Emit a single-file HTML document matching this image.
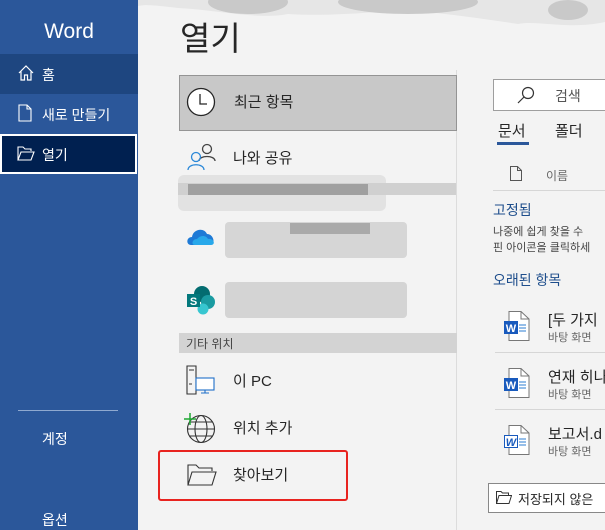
<!DOCTYPE html>
<html><head><meta charset="utf-8"><style>
*{margin:0;padding:0;box-sizing:border-box}
body{width:605px;height:530px;overflow:hidden;background:#f3f3f3;font-family:"Liberation Sans","Noto Sans CJK KR",sans-serif;position:relative;color:#262626}
.abs{position:absolute}
#side{left:0;top:0;width:138px;height:530px;background:#2b579a;color:#fff}
.t{font-size:14px;white-space:nowrap}
</style></head><body>
<div id="side" class="abs">
 <div class="abs" style="left:0;top:20px;width:138px;text-align:center;font-size:21px">Word</div>
 <div class="abs" style="left:0;top:54px;width:138px;height:40px;background:#1e4680"></div>
 <svg class="abs" style="left:17px;top:64px" width="18" height="18" viewBox="0 0 18 18" fill="none" stroke="#fff" stroke-width="1.2"><path d="M2 9 L9 2 L16 9 M4 7.5 V16 H7.5 V11 H10.5 V16 H14 V7.5"/></svg>
 <div class="abs t" style="left:42px;top:65px">홈</div>
 <svg class="abs" style="left:18px;top:104px" width="14" height="18" viewBox="0 0 14 18" fill="none" stroke="#fff" stroke-width="1.1"><path d="M1 1 H9 L13 5 V17 H1 Z M9 1 V5 H13"/></svg>
 <div class="abs t" style="left:42px;top:105px">새로 만들기</div>
 <div class="abs" style="left:0;top:134px;width:137px;height:40px;background:#002050;border:2px solid #fff"></div>
 <svg class="abs" style="left:17px;top:146px" width="18" height="15" viewBox="0 0 18 15" fill="none" stroke="#fff" stroke-width="1.1"><path d="M1 14 V1 H6 L8 3 H14 V5 M1 14 L4 6 H17 L14 14 Z"/></svg>
 <div class="abs t" style="left:42px;top:145px">열기</div>
 <div class="abs" style="left:18px;top:410px;width:100px;height:1px;background:#8fa9d0"></div>
 <div class="abs t" style="left:42px;top:429px">계정</div>
 <div class="abs t" style="left:42px;top:510px">옵션</div>
</div>
<!-- top decorative -->
<svg class="abs" style="left:138px;top:0" width="467" height="45" viewBox="0 0 467 45">
 <path d="M0 0 H467 V22 C430 30 400 20 380 24 C340 18 300 12 260 10 C220 14 180 16 150 14 C120 20 80 10 40 8 C20 6 10 4 0 6Z" fill="#e6e6e6"/>
 <ellipse cx="110" cy="2" rx="40" ry="12" fill="#c9c9c9"/>
 <ellipse cx="270" cy="2" rx="70" ry="12" fill="#c9c9c9"/>
 <ellipse cx="430" cy="10" rx="20" ry="10" fill="#c9c9c9"/>
</svg>
<div class="abs" style="left:180px;top:12px;font-size:33px;color:#262626">열기</div>
<!-- left column -->
<div class="abs" style="left:456px;top:70px;width:1px;height:460px;background:#dcdcdc"></div>
<div class="abs" style="left:179px;top:75px;width:278px;height:56px;background:#c8c8c8;border:1px solid #949494"></div>
<svg class="abs" style="left:186px;top:87px" width="30" height="30" viewBox="0 0 30 30"><circle cx="15" cy="15" r="13.5" fill="#fff" stroke="#262626" stroke-width="1.3"/><path d="M14 7 V17 H21" fill="none" stroke="#262626" stroke-width="1.3"/></svg>
<div class="abs" style="left:234px;top:91px;font-size:15px">최근 항목</div>
<svg class="abs" style="left:186px;top:142px" width="32" height="32" viewBox="0 0 32 32" fill="none" stroke-width="1.3"><circle cx="21" cy="7" r="4.5" stroke="#444"/><path d="M13 19 C13 13 29 13 29 19" stroke="#444"/><circle cx="10" cy="15" r="4.5" stroke="#2b88d8"/><path d="M2 28 C2 21 18 21 18 28" stroke="#2b88d8"/></svg>
<div class="abs" style="left:233px;top:147px;font-size:15px">나와 공유</div>
<div class="abs" style="left:178px;top:175px;width:208px;height:36px;background:#e2e2e2;border-radius:6px"></div>
<div class="abs" style="left:178px;top:183px;width:278px;height:12px;background:#d0d0d0"></div>
<div class="abs" style="left:188px;top:184px;width:180px;height:11px;background:#a0a0a0"></div>
<svg class="abs" style="left:186px;top:225px" width="30" height="22" viewBox="0 0 30 22"><path d="M5 20 C0 20 0 12 6 12 C7 4 18 2 21 9 C28 9 30 20 24 20Z" fill="#1e7ad6"/><path d="M9 20 C5 20 6 14 11 14 C14 10 20 10 22 14 C28 13 30 20 25 20Z" fill="#28a8ea"/></svg>
<div class="abs" style="left:225px;top:222px;width:182px;height:36px;background:#d6d6d6;border-radius:4px"></div>
<div class="abs" style="left:290px;top:223px;width:80px;height:11px;background:#aaa"></div>
<svg class="abs" style="left:186px;top:285px" width="30" height="30" viewBox="0 0 30 30"><circle cx="16" cy="9" r="8" fill="#036c70"/><circle cx="22" cy="17" r="7" fill="#1a9ba1"/><circle cx="17" cy="24" r="5.5" fill="#37c6d0"/><rect x="1" y="9" width="13" height="13" fill="#03787c"/><text x="7.5" y="20" font-size="11" fill="#fff" text-anchor="middle" font-weight="bold" font-family="Liberation Sans">S</text></svg>
<div class="abs" style="left:225px;top:282px;width:182px;height:36px;background:#d4d4d4;border-radius:4px"></div>
<div class="abs" style="left:179px;top:333px;width:278px;height:20px;background:#d3d3d3"></div>
<div class="abs" style="left:186px;top:335px;font-size:12px;color:#444">기타 위치</div>
<svg class="abs" style="left:186px;top:365px" width="30" height="30" viewBox="0 0 30 30" fill="none" stroke-width="1.1"><path d="M1 1 H10 V29 H1 Z M3 5 H8 M3 19 H6" stroke="#333"/><rect x="10" y="13" width="18" height="12" fill="#fff" stroke="#1e6fc8"/><path d="M19 25 V28 M15 28 H23" stroke="#1e6fc8"/></svg>
<div class="abs" style="left:233px;top:370px;font-size:15px">이 PC</div>
<svg class="abs" style="left:184px;top:412px" width="32" height="32" viewBox="0 0 32 32" fill="none" stroke="#333" stroke-width="1.1"><circle cx="17" cy="17" r="13.5"/><ellipse cx="17" cy="17" rx="6" ry="13.5"/><path d="M3.5 17 H30.5 M5.5 10 H28.5 M5.5 24 H28.5"/><path d="M6 1 V13 M0 7 H12" stroke="#1ea832" stroke-width="1.5"/></svg>
<div class="abs" style="left:233px;top:417px;font-size:15px">위치 추가</div>
<div class="abs" style="left:158px;top:450px;width:190px;height:51px;border:2px solid #e8231f;border-radius:3px"></div>
<svg class="abs" style="left:187px;top:464px" width="30" height="22" viewBox="0 0 30 22" fill="none" stroke="#333" stroke-width="1.1"><path d="M1 21 V1 H9 L12 4 H25 V7 M1 21 L5 8 H29 L25 21 Z"/></svg>
<div class="abs" style="left:233px;top:464px;font-size:15px">찾아보기</div>
<!-- right column -->
<div class="abs" style="left:493px;top:79px;width:120px;height:32px;background:#fff;border:1px solid #9e9e9e"></div>
<svg class="abs" style="left:517px;top:86px" width="18" height="18" viewBox="0 0 18 18" fill="none" stroke="#333" stroke-width="1.2"><circle cx="11" cy="7" r="5.5"/><path d="M7 11 L1 17"/></svg>
<div class="abs" style="left:555px;top:86px;font-size:14px;color:#555">검색</div>
<div class="abs" style="left:498px;top:120px;font-size:15px">문서</div>
<div class="abs" style="left:497px;top:142px;width:32px;height:3px;background:#2b579a"></div>
<div class="abs" style="left:555px;top:120px;font-size:15px">폴더</div>
<svg class="abs" style="left:510px;top:166px" width="12" height="15" viewBox="0 0 12 15" fill="none" stroke="#555"><path d="M.5 .5 H7.5 L11.5 4.5 V14.5 H.5 Z M7.5 .5 V4.5 H11.5"/></svg>
<div class="abs" style="left:546px;top:167px;font-size:12px;color:#666">이름</div>
<div class="abs" style="left:493px;top:190px;width:112px;height:1px;background:#d6d6d6"></div>
<div class="abs" style="left:493px;top:200px;font-size:14px;color:#1e4e8c">고정됨</div>
<div class="abs" style="left:493px;top:224px;font-size:11px;color:#444;line-height:16px;white-space:nowrap">나중에 쉽게 찾을 수<br>핀 아이콘을 클릭하세</div>
<div class="abs" style="left:493px;top:270px;font-size:14px;color:#1e4e8c">오래된 항목</div>
<div class="abs" style="left:495px;top:352px;width:110px;height:1px;background:#d6d6d6"></div>
<div class="abs" style="left:495px;top:409px;width:110px;height:1px;background:#d6d6d6"></div>
<svg class="abs" style="left:504px;top:311px" width="26" height="30" viewBox="0 0 26 30"><path d="M5 .5 H17 L25 8 V29.5 H5 Z" fill="#fff" stroke="#777"/><path d="M17 .5 V8 H25" fill="none" stroke="#777"/><path d="M15 14 H22 M15 17 H22 M15 20 H22" stroke="#2b7cd3"/><rect x="0" y="10" width="14" height="13" fill="#185abd"/><text x="7" y="21" font-size="11" fill="#fff" text-anchor="middle" font-weight="bold" font-family="Liberation Sans">W</text></svg>
<svg class="abs" style="left:504px;top:368px" width="26" height="30" viewBox="0 0 26 30"><path d="M5 .5 H17 L25 8 V29.5 H5 Z" fill="#fff" stroke="#777"/><path d="M17 .5 V8 H25" fill="none" stroke="#777"/><path d="M15 14 H22 M15 17 H22 M15 20 H22" stroke="#2b7cd3"/><rect x="0" y="10" width="14" height="13" fill="#185abd"/><text x="7" y="21" font-size="11" fill="#fff" text-anchor="middle" font-weight="bold" font-family="Liberation Sans">W</text></svg>
<svg class="abs" style="left:504px;top:425px" width="26" height="30" viewBox="0 0 26 30"><path d="M5 .5 H17 L25 8 V29.5 H5 Z" fill="#fff" stroke="#777"/><path d="M17 .5 V8 H25" fill="none" stroke="#777"/><path d="M15 14 H22 M15 17 H22 M15 20 H22" stroke="#2b7cd3"/><rect x="0.5" y="10.5" width="13" height="12" fill="#fff" stroke="#185abd"/><text x="7" y="21" font-size="11" fill="#185abd" text-anchor="middle" font-weight="bold" font-style="italic" font-family="Liberation Sans">W</text></svg>
<div class="abs" style="left:548px;top:309px;font-size:15px;white-space:nowrap">[두 가지</div>
<div class="abs" style="left:548px;top:329px;font-size:11px;color:#666;white-space:nowrap">바탕 화면</div>
<div class="abs" style="left:548px;top:366px;font-size:15px;white-space:nowrap">연재 히나</div>
<div class="abs" style="left:548px;top:386px;font-size:11px;color:#666;white-space:nowrap">바탕 화면</div>
<div class="abs" style="left:548px;top:423px;font-size:15px;white-space:nowrap">보고서.d</div>
<div class="abs" style="left:548px;top:443px;font-size:11px;color:#666;white-space:nowrap">바탕 화면</div>
<div class="abs" style="left:488px;top:483px;width:130px;height:30px;background:#fff;border:1px solid #888"></div>
<svg class="abs" style="left:496px;top:491px" width="16" height="13" viewBox="0 0 16 13" fill="none" stroke="#333"><path d="M.5 12.5 V.5 H5 L6.5 2 H12.5 V4 M.5 12.5 L3 4.5 H15.5 L13 12.5 Z"/></svg>
<div class="abs" style="left:518px;top:489px;font-size:13px;white-space:nowrap">저장되지 않은</div>
</body></html>
